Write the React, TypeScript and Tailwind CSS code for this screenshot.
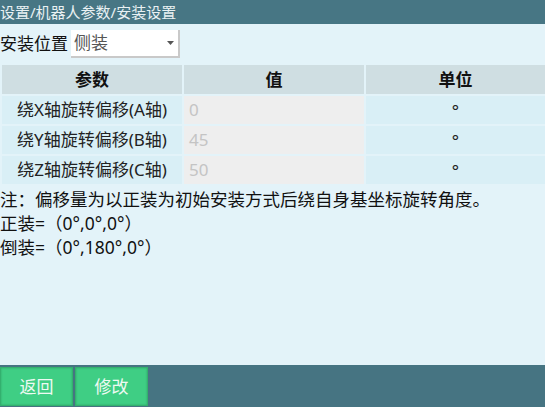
import React from "react";

const rows = [
  { name: "绕X轴旋转偏移(A轴)", value: "0" },
  { name: "绕Y轴旋转偏移(B轴)", value: "45" },
  { name: "绕Z轴旋转偏移(C轴)", value: "50" },
];

export default function App() {
  return (
    <div
      className="w-[545px] h-[407px] flex flex-col bg-[#e3f3f9] overflow-hidden text-[#111]"
      style={{ fontFamily: '"Noto Sans", "Noto Sans CJK SC", sans-serif' }}
    >
      <div className="h-[24px] bg-[#477684] text-[#e9f1f3] text-[15px] leading-[24px] whitespace-nowrap">
        设置/机器人参数/安装设置
      </div>
      <div className="flex-1 flex flex-col">
        <div className="flex items-center h-[28px] mt-[6px]">
          <span className="text-[17px] leading-[28px]">安装位置</span>
          <div className="ml-[3px] w-[109px] h-[28px] bg-white border-r-2 border-b-2 border-[#c9c9c9] flex items-center justify-between pl-[3px] pr-[4px]">
            <span className="text-[17px] text-[#555]">侧装</span>
            <svg width="7" height="4" viewBox="0 0 7 4">
              <path d="M0 0 H7 L3.5 4 Z" fill="#555" />
            </svg>
          </div>
        </div>
        <div className="mt-[7px] pl-[2px] grid grid-cols-[180px_180px_1fr] gap-[2px]">
          <div className="h-[29px] bg-[#cfdee2] flex items-center justify-center font-bold text-[17px]">参数</div>
          <div className="h-[29px] bg-[#cfdee2] flex items-center justify-center font-bold text-[17px]">值</div>
          <div className="h-[29px] bg-[#cfdee2] flex items-center justify-center font-bold text-[17px]">单位</div>
          {rows.map((r) => (
            <React.Fragment key={r.name}>
              <div className="h-[28px] bg-[#d9eff6] flex items-center justify-center text-[17px] text-[#222]">{r.name}</div>
              <div className="h-[28px] bg-[#eeeeee] flex items-center pl-[5px] text-[17px] text-[#c4c4c4]">{r.value}</div>
              <div className="h-[28px] bg-[#d9eff6] flex items-start justify-center pt-[2px] text-[17px] text-[#222]">°</div>
            </React.Fragment>
          ))}
        </div>
        <div className="mt-[3px] text-[17.5px] leading-[24px] text-[#111]">
          <div>注：偏移量为以正装为初始安装方式后绕自身基坐标旋转角度。</div>
          <div>正装=（0°,0°,0°）</div>
          <div>倒装=（0°,180°,0°）</div>
        </div>
      </div>
      <div className="h-[42px] bg-[#467482] flex items-center gap-[2px] pt-[1px]">
        <button className="w-[73px] h-[39px] bg-[#3fce84] border border-[#33b06e] shadow-[inset_0_0_2px_#2e9e63] text-[#eefaf3] text-[17px]">返回</button>
        <button className="w-[73px] h-[39px] bg-[#3fce84] border border-[#33b06e] shadow-[inset_0_0_2px_#2e9e63] text-[#eefaf3] text-[17px]">修改</button>
      </div>
    </div>
  );
}
